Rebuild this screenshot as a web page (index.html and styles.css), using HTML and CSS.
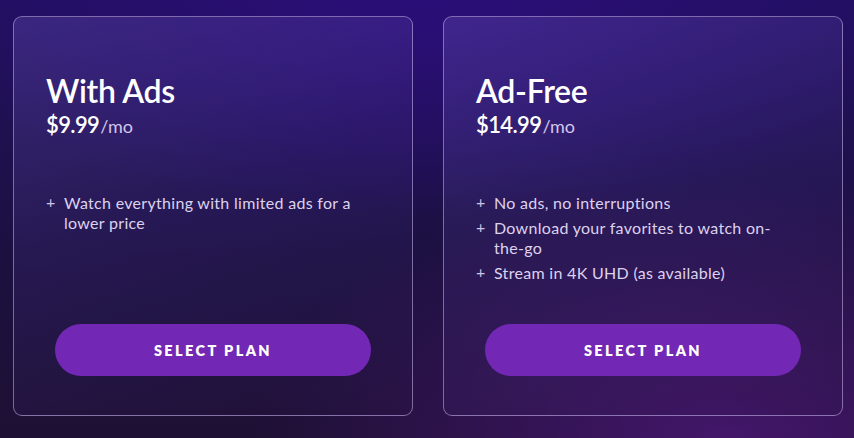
FILE: index.html
```html
<!DOCTYPE html>
<html lang="en">
<head>
    <meta charset="utf-8">
    <title>Choose your plan</title>
    <link rel="stylesheet" href="styles.css">
</head>
<body>
<div class="plans">
    <div class="plan">
        <div class="plan-head">
            <h2 class="plan-name">With Ads</h2>
            <div class="plan-price">$9.99<span class="per">/mo</span></div>
        </div>
        <ul class="perks">
            <li>Watch everything with limited ads for a lower price</li>
        </ul>
        <button class="select-btn" type="button">SELECT PLAN</button>
    </div>
    <div class="plan">
        <div class="plan-head">
            <h2 class="plan-name">Ad-Free</h2>
            <div class="plan-price">$14.99<span class="per">/mo</span></div>
        </div>
        <ul class="perks">
            <li>No ads, no interruptions</li>
            <li>Download your favorites to watch on-the-go</li>
            <li>Stream in 4K UHD (as available)</li>
        </ul>
        <button class="select-btn" type="button">SELECT PLAN</button>
    </div>
</div>
</body>
</html>
```

FILE: styles.css
```css
html, body {
    margin: 0;
    height: 100%;
}
body {
    font-family: Lato, "Open Sans", sans-serif;
    color: #fff;
    background:
        radial-gradient(ellipse 60% 50% at 50% 0%, #2a0e78 0%, rgba(42,14,120,0) 100%),
        radial-gradient(ellipse 55% 60% at 85% 100%, #43166a 0%, rgba(67,22,106,0) 100%),
        linear-gradient(180deg, #221060 0%, #1c1040 60%, #1e1034 100%);
}
.plans {
    display: flex;
    gap: 30px;
    padding: 16px 11px 0 13px;
}
.plan {
    box-sizing: border-box;
    width: 400px;
    height: 400px;
    border: 1px solid rgba(200, 180, 230, 0.55);
    border-radius: 9px;
    background: linear-gradient(160deg, rgba(120,100,200,0.28) 0%, rgba(100,80,180,0.14) 45%, rgba(40,20,60,0.15) 100%);
    padding: 0 32px 39px 32px;
    display: flex;
    flex-direction: column;
}
.plan-head {
    padding-top: 56px;
    height: 120px;
}
.plan-name {
    margin: 0;
    font-size: 32px;
    line-height: 36px;
    font-weight: 600;
    letter-spacing: -0.3px;
}
.plan-price {
    margin-top: 3px;
    font-size: 22px;
    line-height: 26px;
    font-weight: 600;
    letter-spacing: -0.6px;
}
.per {
    font-size: 18px;
    font-weight: 400;
    color: #d4c6ec;
    letter-spacing: 0;
    margin-left: 1px;
}
.perks {
    list-style: none;
    margin: 0;
    padding: 0 22px 0 0;
}
.perks li {
    position: relative;
    padding-left: 18px;
    font-size: 16px;
    line-height: 20px;
    color: #ddd2ee;
    letter-spacing: 0.3px;
    margin-bottom: 5px;
}
.perks li::before {
    content: "+";
    position: absolute;
    left: 0;
    top: -1px;
    color: #cfc2e6;
}
.select-btn {
    margin: auto 9px 0 9px;
    height: 52px;
    border: none;
    border-radius: 26px;
    background: #7228b5;
    color: #fff;
    font-family: Lato, "Open Sans", sans-serif;
    font-size: 14.5px;
    font-weight: 800;
    letter-spacing: 2.4px;
    cursor: pointer;
}
```
